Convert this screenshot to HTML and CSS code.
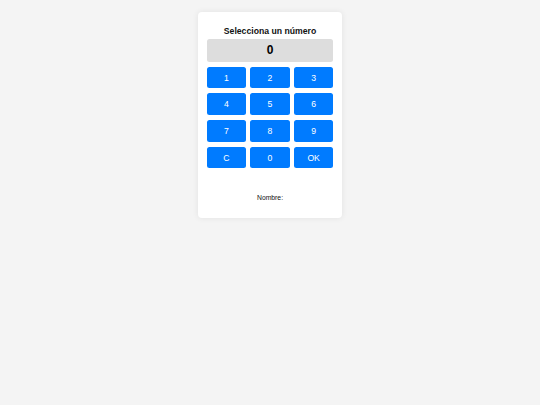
FILE: index.html
```html
<!DOCTYPE html>
<html lang="es">
<head>
<meta charset="utf-8">
<title>Selecciona un número</title>
<link rel="stylesheet" href="styles.css">
</head>
<body>
<div class="card">
  <h2 class="title">Selecciona un número</h2>
  <div class="display">0</div>
  <div class="keypad">
    <button class="key">1</button>
    <button class="key">2</button>
    <button class="key">3</button>
    <button class="key">4</button>
    <button class="key">5</button>
    <button class="key">6</button>
    <button class="key">7</button>
    <button class="key">8</button>
    <button class="key">9</button>
    <button class="key">C</button>
    <button class="key">0</button>
    <button class="key">OK</button>
  </div>
  <p class="name">Nombre: </p>
</div>
</body>
</html>
```
FILE: styles.css
```css
html, body {
  margin: 0;
  padding: 0;
  background: #f4f4f4;
  font-family: "Liberation Sans", Arial, sans-serif;
}
body {
  display: flex;
  justify-content: center;
  align-items: flex-start;
  min-height: 405px;
}
.card {
  width: 144px;
  box-sizing: border-box;
  margin-top: 12px;
  padding: 0 8.7px 14.7px;
  background: #ffffff;
  border-radius: 4px;
  box-shadow: 0 0 6px rgba(0, 0, 0, 0.08);
  display: flex;
  flex-direction: column;
}
.title {
  margin: 12.5px 0 0;
  font-size: 8.67px;
  line-height: 12px;
  font-weight: bold;
  text-align: center;
  color: #111;
}
.display {
  margin-top: 2.5px;
  height: 23px;
  background: #dddddd;
  border-radius: 2.5px;
  font-size: 12px;
  font-weight: bold;
  line-height: 23px;
  text-align: center;
  color: #000;
}
.keypad {
  margin-top: 4.7px;
  display: grid;
  grid-template-columns: repeat(3, 1fr);
  grid-auto-rows: 21.7px;
  column-gap: 4.3px;
  row-gap: 5px;
}
.key {
  border: none;
  margin: 0;
  padding: 0;
  background: #007bff;
  color: #ffffff;
  border-radius: 2.5px;
  font-family: "Liberation Sans", Arial, sans-serif;
  font-size: 8.67px;
}
.name {
  margin: 25px 0 0;
  font-size: 6.8px;
  line-height: 10px;
  text-align: center;
  color: #111;
}
```
